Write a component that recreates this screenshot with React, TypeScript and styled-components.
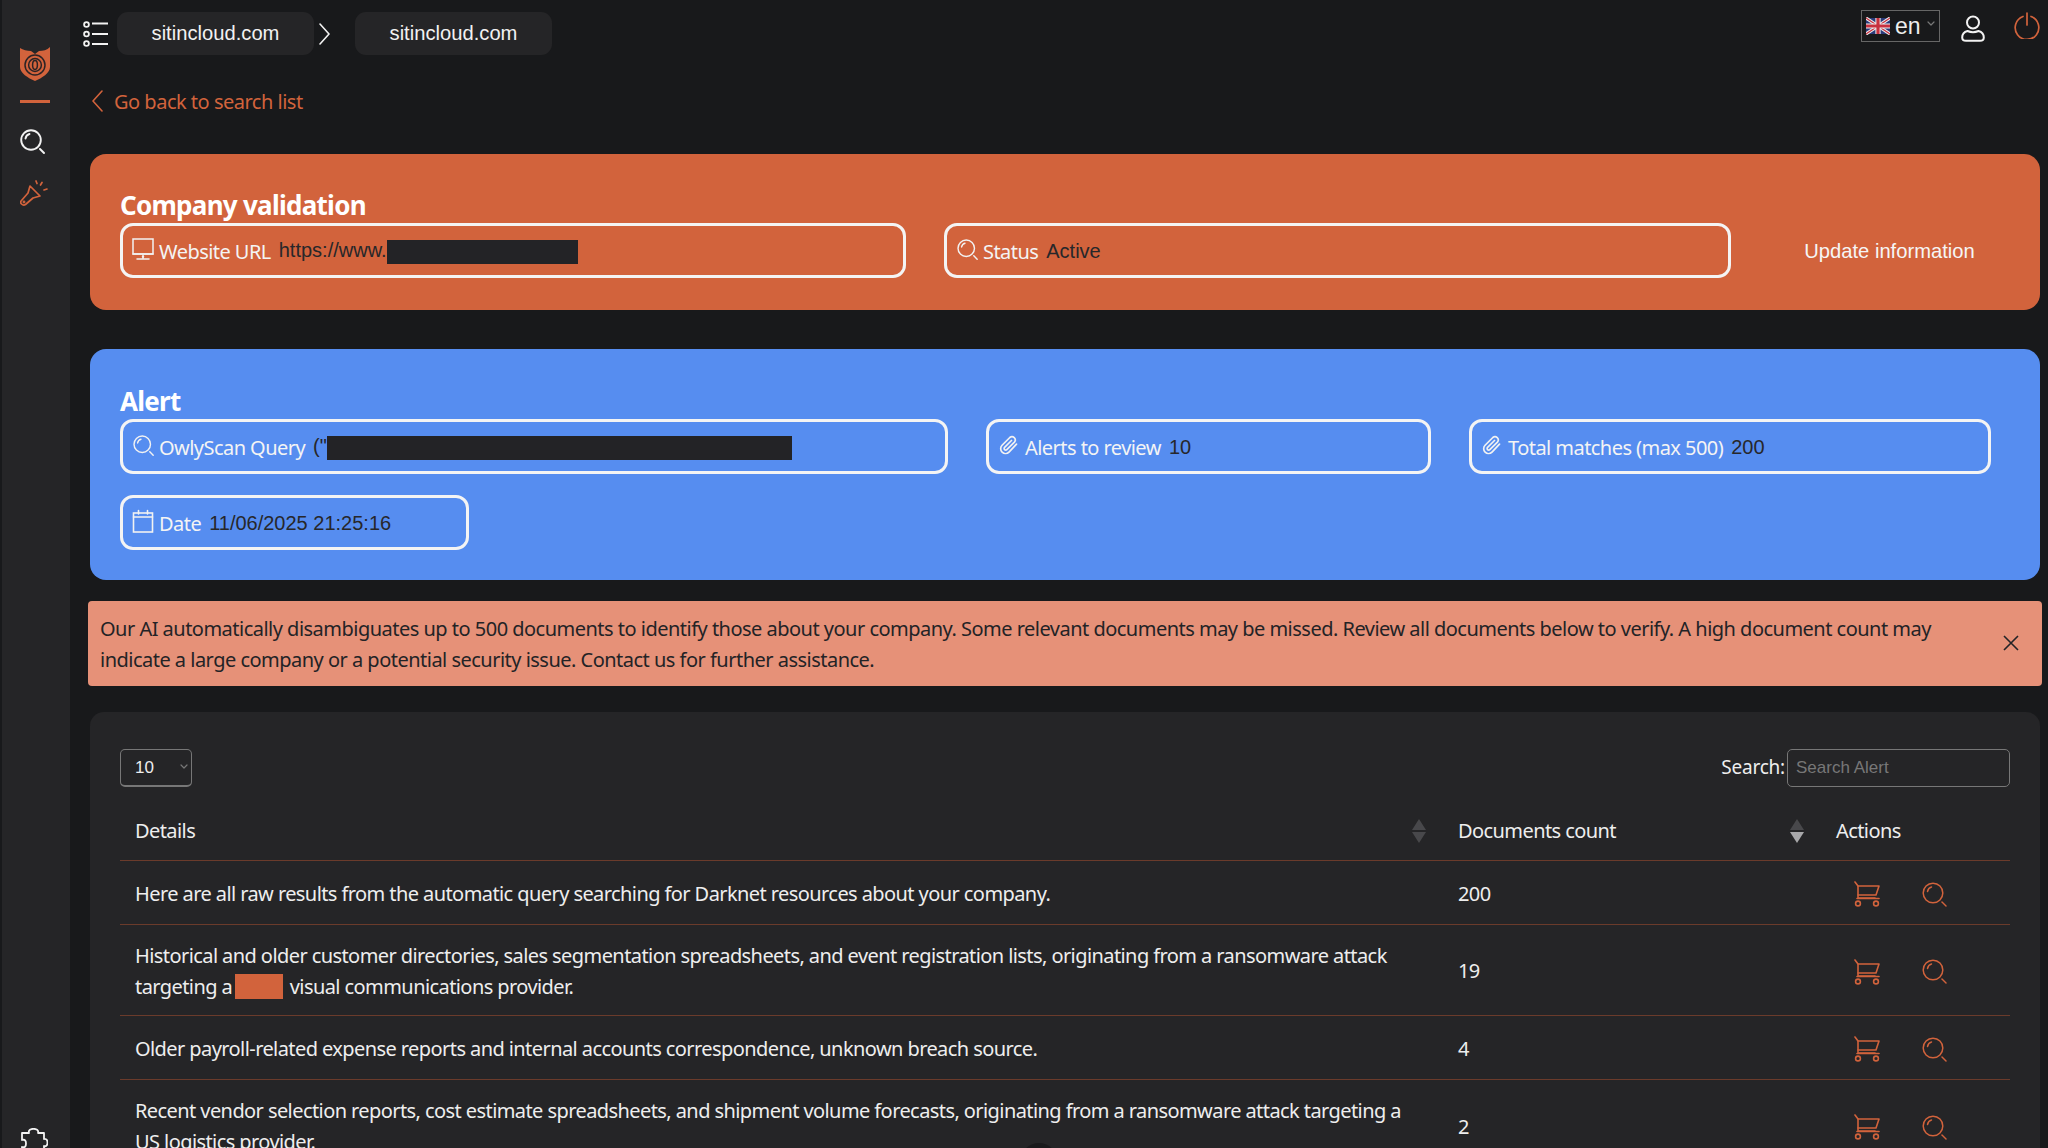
import React from 'react';
import styled, { createGlobalStyle } from 'styled-components';

const ORANGE = '#d2633c';
const UI = `"Noto Sans", "Open Sans", sans-serif`;
const ARIAL = `"Liberation Sans", Arial, sans-serif`;

const Global = createGlobalStyle`
  html, body { margin: 0; padding: 0; background: #18191b; }
  body { width: 2048px; height: 1148px; overflow: hidden; font-family: ${UI}; }
  * { box-sizing: border-box; }
`;

const Shell = styled.div`
  display: flex;
  width: 2048px;
  height: 1148px;
  overflow: hidden;
  position: relative;
  background: #18191b;
`;

const Sidebar = styled.aside`
  width: 70px;
  flex: none;
  background: #252527;
  border-left: 2px solid #18191b;
  display: flex;
  flex-direction: column;
  align-items: flex-start;
  padding: 47px 0 0 18px;
`;
const Divider = styled.div`
  width: 30px;
  height: 3px;
  background: ${ORANGE};
  margin: 19px 0 26px 0;
`;
const SideIcon = styled.div`
  height: 25px;
  margin-bottom: 26px;
  display: flex;
`;
const SideBottom = styled.div`
  margin-top: auto;
  height: 20px;
  overflow: hidden;
`;

const Main = styled.main`
  flex: 1;
  min-width: 0;
  padding: 0 8px 0 20px;
  display: flex;
  flex-direction: column;
`;
const TopBar = styled.header`
  height: 68px;
  flex: none;
  display: flex;
  align-items: flex-start;
  padding-top: 12px;
  margin-left: -7px;
`;
const ListBtn = styled.div`
  width: 34px;
  height: 43px;
  display: flex;
  align-items: center;
`;
const Crumb = styled.div`
  width: 197px;
  height: 43px;
  background: #252527;
  border-radius: 11px;
  color: #f2f2f2;
  font: 20.2px/43px ${ARIAL};
  text-align: center;
`;
const CrumbArrow = styled.div`
  width: 41px;
  height: 43px;
  padding: 11px 0 0 5px;
`;
const TopRight = styled.div`
  margin-left: auto;
  display: flex;
  align-items: flex-start;
  margin-top: -2px;
  margin-right: -8px;
`;
const Lang = styled.div`
  width: 79px;
  height: 32px;
  border: 1px solid #666;
  display: flex;
  align-items: center;
  padding-left: 4px;
  color: #eee;
  font: 23px/30px ${ARIAL};
  position: relative;
`;
const LangText = styled.span`
  margin-left: 5px;
`;
const LangChev = styled.span`
  position: absolute;
  right: 4px;
  top: 10px;
  display: flex;
`;
const UserBtn = styled.div`
  margin: 5px 0 0 21px;
`;
const PowerBtn = styled.div`
  margin: 2px 8px 0 29px;
`;

const BackRow = styled.a`
  height: 65px;
  flex: none;
  display: flex;
  align-items: center;
  gap: 11px;
  margin-left: 2px;
  padding-top: 1px;
  color: ${ORANGE};
  font-size: 20px;
  letter-spacing: -0.5px;
`;

const Card = styled.section<{ $bg: string; $top: number; $bottom: number }>`
  flex: none;
  background: ${(p) => p.$bg};
  border-radius: 16px;
  padding: ${(p) => p.$top}px 30px ${(p) => p.$bottom}px 30px;
  margin-top: 21px;
  & + & { margin-top: 39px; }
`;
const CardTitle = styled.h2`
  margin: 0;
  height: 36px;
  color: #fff;
  font: 700 26px/37px ${UI};
  letter-spacing: -0.73px;
`;
const PillRow = styled.div`
  display: flex;
  align-items: center;
  gap: 38px;
  & + & { margin-top: 21px; }
`;
const Pill = styled.div<{ $w: number }>`
  width: ${(p) => p.$w}px;
  height: 55px;
  flex: none;
  border: 3px solid #f4f4f4;
  border-radius: 13px;
  display: flex;
  align-items: center;
  padding-left: 8px;
  position: relative;
`;
const PillIcon = styled.span`
  display: flex;
  width: 24px;
  justify-content: center;
  margin-top: -3px;
`;
const PillLabel = styled.span`
  margin-left: 4px;
  margin-top: 2px;
  color: #f4f4f4;
  font-size: 20px;
  letter-spacing: -0.55px;
  white-space: nowrap;
`;
const PillValue = styled.span`
  margin-left: 8px;
  color: #27272a;
  font: 20px/26px ${ARIAL};
  white-space: nowrap;
`;
const Redact = styled.span<{ $w: number }>`
  display: inline-block;
  width: ${(p) => p.$w}px;
  height: 24px;
  background: #232326;
  vertical-align: middle;
`;
const UpdateBtn = styled.div`
  flex: 1;
  text-align: center;
  color: #f6f6f6;
  font: 20.2px/26px ${ARIAL};
`;

const Banner = styled.div`
  flex: none;
  margin: 21px -2px 0 -2px;
  height: 85px;
  background: #e69178;
  border-radius: 4px;
  padding: 12px 70px 0 12px;
  color: #232326;
  font-size: 20px;
  line-height: 31px;
  letter-spacing: -0.515px;
  position: relative;
`;
const CloseBtn = styled.span`
  position: absolute;
  right: 23px;
  top: 34px;
  display: flex;
`;

const TableCard = styled.section`
  flex: 1;
  min-height: 0;
  margin-top: 26px;
  background: #252527;
  border-radius: 14px 14px 0 0;
  padding: 37px 30px 0 30px;
  overflow: hidden;
`;
const Controls = styled.div`
  display: flex;
  align-items: center;
  justify-content: space-between;
  height: 38px;
`;
const LengthSelect = styled.div`
  width: 72px;
  height: 38px;
  border: 1px solid #777;
  border-bottom-width: 2px;
  border-radius: 5px;
  color: #eee;
  font: 17px/36px ${ARIAL};
  padding-left: 14px;
  position: relative;
`;
const SelectChev = styled.span`
  position: absolute;
  right: 3px;
  top: 14px;
  display: flex;
`;
const SearchWrap = styled.label`
  display: flex;
  align-items: center;
  gap: 2px;
`;
const SearchLabel = styled.span`
  margin-top: -2px;
  color: #eee;
  font-size: 19px;
  letter-spacing: -0.2px;
`;
const SearchInput = styled.div`
  width: 223px;
  height: 38px;
  border: 1px solid #777;
  border-radius: 5px;
  color: #777;
  font: 17px/36px ${ARIAL};
  padding-left: 8px;
`;
const Table = styled.table`
  width: 1890px;
  margin-top: 18px;
  border-collapse: collapse;
  table-layout: fixed;
  color: #eee;
  font-size: 20px;
  letter-spacing: -0.58px;
`;
const Th = styled.th`
  position: relative;
  height: 55px;
  padding: 0 15px 3px 15px;
  font-weight: 400;
  text-align: left;
  border-bottom: 1px solid #6b3b2b;
`;
const SortIcon = styled.span`
  position: absolute;
  right: 17px;
  top: 14px;
  display: flex;
`;
const Row = styled.tr`
  border-bottom: 1px solid #6b3b2b;
`;
const Td = styled.td`
  padding: 16.5px 15px 12.5px 15px;
  line-height: 30.7px;
  vertical-align: middle;
  &:first-child { padding-right: 25px; }
`;
const Actions = styled.div`
  display: flex;
  align-items: center;
  gap: 42px;
  min-height: 34px;
  padding-left: 18px;
`;
const Mark = styled.span`
  display: inline-block;
  width: 48px;
  height: 25px;
  background: ${ORANGE};
  vertical-align: -5px;
  margin: 0 2px 0 3px;
`;
const FloatBlob = styled.div`
  position: absolute;
  left: 1020px;
  top: 1143px;
  width: 38px;
  height: 38px;
  border-radius: 50%;
  background: #1a1a1c;
`;

const Mag = ({ c = '#f2f2f2', s = 25, w = 1.6 }: { c?: string; s?: number; w?: number }) => (
  <svg width={s} height={s} viewBox="0 0 25 25" fill="none" stroke={c} strokeWidth={w} strokeLinecap="round">
    <circle cx="11" cy="11" r="9.8" />
    <path d="M5.5 9.5 C6 7 7.5 5.5 9.5 5" />
    <path d="M20 20 L24 24" />
  </svg>
);
const Cart = () => (
  <svg width="26" height="26" viewBox="0 0 26 26" fill="none" stroke={ORANGE} strokeWidth="1.6" strokeLinecap="round" strokeLinejoin="round">
    <path d="M1 1 L4 5 V17 H21" />
    <path d="M4 5 H25 L22 14 H4" />
    <path d="M3 17.5 H25" />
    <circle cx="4" cy="22.5" r="2.4" />
    <circle cx="22" cy="22.5" r="2.4" />
  </svg>
);
const Clip = () => (
  <svg width="20" height="20" viewBox="0 0 24 24" fill="none" stroke="#f2f2f2" strokeWidth="2" strokeLinecap="round" strokeLinejoin="round">
    <path d="M21 11 L12 20.5 a5.8 5.8 0 0 1 -8.3 -8.2 L13 3 a3.9 3.9 0 0 1 5.5 5.5 L9.4 17.6 a1.9 1.9 0 0 1 -2.7 -2.7 L15 6.6" />
  </svg>
);
const Monitor = () => (
  <svg width="22" height="24" viewBox="0 0 22 24" fill="none" stroke="#f2f2f2" strokeWidth="1.5" strokeLinecap="round">
    <rect x="1" y="2" width="20" height="15" />
    <path d="M1 17 H21 M11 19 V21 M5 22 H17" />
    <circle cx="11" cy="19.5" r=".5" />
  </svg>
);
const Calendar = () => (
  <svg width="22" height="25" viewBox="0 0 22 25" fill="none" stroke="#f2f2f2" strokeWidth="1.6" strokeLinecap="round">
    <rect x="1.5" y="4" width="19" height="19" />
    <path d="M1.5 8 H20.5 M6.5 1.5 V5 M15.5 1.5 V5" />
  </svg>
);
const Chev = ({ c, w, h, dir, sw = 1.6 }: { c: string; w: number; h: number; dir: 'l' | 'r' | 'd'; sw?: number }) => (
  <svg width={w} height={h} viewBox={`0 0 ${w} ${h}`} fill="none" stroke={c} strokeWidth={sw} strokeLinecap="round" strokeLinejoin="round">
    {dir === 'l' && <path d={`M${w - 1} 1 L1 ${h / 2} L${w - 1} ${h - 1}`} />}
    {dir === 'r' && <path d={`M1 1 L${w - 1} ${h / 2} L1 ${h - 1}`} />}
    {dir === 'd' && <path d={`M1 1 L${w / 2} ${h - 1} L${w - 1} 1`} />}
  </svg>
);
const Logo = () => (
  <svg width="30" height="34" viewBox="0 0 30 34">
    <path fill={ORANGE} d="M0 1 C3 3 7 4 11 4 L15 7 L19 4 C23 4 27 3 30 0 V20 C30 26 22 31 15 34 C8 31 0 26 0 20 Z" />
    <g fill="none" stroke="#2b2325" strokeWidth="1.5">
      <circle cx="15" cy="18" r="10" />
      <circle cx="15" cy="18" r="6.4" />
      <ellipse cx="15" cy="18" rx="2.4" ry="4.4" />
    </g>
  </svg>
);
const Flashlight = () => (
  <svg width="28" height="26" viewBox="0 0 28 26" fill="none" stroke={ORANGE} strokeWidth="1.7" strokeLinecap="round" strokeLinejoin="round">
    <path d="M10 6 L20 16 L13 18 L5.5 24.5 C4 25.5 2.5 25 1.5 24 C0.5 23 0.5 21.5 1.5 20.5 L8 13 Z" />
    <circle cx="4" cy="22" r=".6" />
    <path d="M16 1 L17 3.5 M22 2.5 L20.5 5 M27 9 L24 10" />
  </svg>
);
const ListIcon = () => (
  <svg width="26" height="26" viewBox="0 0 26 26" fill="none" stroke="#f2f2f2" strokeWidth="1.8">
    <circle cx="3.5" cy="3.5" r="2.4" />
    <circle cx="3.5" cy="13" r="2.4" />
    <circle cx="3.5" cy="22.5" r="2.4" />
    <path d="M9 2.5 H25 M9 13 H25 M9 23 H25" />
  </svg>
);
const Flag = () => (
  <svg width="24" height="18" viewBox="0 0 60 40">
    <rect width="60" height="40" fill="#2b3a7a" />
    <path d="M0 0 L60 40 M60 0 L0 40" stroke="#eee" strokeWidth="8" />
    <path d="M0 0 L60 40 M60 0 L0 40" stroke="#c8313f" strokeWidth="3" />
    <path d="M30 0 V40 M0 20 H60" stroke="#eee" strokeWidth="13" />
    <path d="M30 0 V40 M0 20 H60" stroke="#c8313f" strokeWidth="8" />
  </svg>
);
const User = () => (
  <svg width="24" height="27" viewBox="0 0 24 27" fill="none" stroke="#f2f2f2" strokeWidth="2">
    <circle cx="12" cy="7.5" r="6" />
    <path d="M6.5 16 C3 17 1.2 19.5 1.2 22.5 C1.2 25 3 25.8 5 25.8 H19 C21 25.8 22.8 25 22.8 22.5 C22.8 19.5 21 17 17.5 16 C14 17.5 10 17.5 6.5 16 Z" />
  </svg>
);
const Power = () => (
  <svg width="26" height="27" viewBox="0 0 26 27" fill="none" stroke={ORANGE} strokeWidth="1.7" strokeLinecap="round">
    <path d="M9 4.5 A11.8 11.8 0 1 0 17 4.5" />
    <path d="M13 1 V13" />
  </svg>
);
const Puzzle = () => (
  <svg width="28" height="28" viewBox="0 0 28 28" fill="none" stroke="#f2f2f2" strokeWidth="1.8" strokeLinejoin="round">
    <path d="M2 5 H9 C8 2 11 0.8 13.5 0.8 C16 0.8 19 2 18 5 H24 V11 C27 10.5 27.5 13 27.5 15 C27.5 17 26 19 24 18 V26 H16 C16.5 23 15 22 13 22 C11 22 9 23 10 26 H2 V19 C5 20 6 18 6 15.5 C6 13 5 11 2 12 Z" />
  </svg>
);
const Sort = ({ down }: { down?: boolean }) => (
  <svg width="14" height="24" viewBox="0 0 14 24">
    <path d="M7 0 L14 11 H0 Z" fill="#48484b" />
    <path d="M7 24 L14 13 H0 Z" fill={down ? '#a8a8aa' : '#48484b'} />
  </svg>
);

const rows: { text: React.ReactNode; count: string }[] = [
  { text: 'Here are all raw results from the automatic query searching for Darknet resources about your company.', count: '200' },
  {
    text: (
      <>
        Historical and older customer directories, sales segmentation spreadsheets, and event registration lists, originating from a ransomware attack targeting a
        <Mark /> visual communications provider.
      </>
    ),
    count: '19',
  },
  { text: 'Older payroll-related expense reports and internal accounts correspondence, unknown breach source.', count: '4' },
  { text: 'Recent vendor selection reports, cost estimate spreadsheets, and shipment volume forecasts, originating from a ransomware attack targeting a US logistics provider.', count: '2' },
];

export default function App() {
  return (
    <Shell>
      <Global />
      <Sidebar>
        <Logo />
        <Divider />
        <SideIcon><Mag s={25} w={1.9} /></SideIcon>
        <SideIcon><Flashlight /></SideIcon>
        <SideBottom><Puzzle /></SideBottom>
      </Sidebar>
      <Main>
        <TopBar>
          <ListBtn><ListIcon /></ListBtn>
          <Crumb>sitincloud.com</Crumb>
          <CrumbArrow><Chev c="#f2f2f2" w={11} h={22} dir="r" /></CrumbArrow>
          <Crumb>sitincloud.com</Crumb>
          <TopRight>
            <Lang>
              <Flag />
              <LangText>en</LangText>
              <LangChev><Chev c="#777" w={8} h={5} dir="d" sw={1.2} /></LangChev>
            </Lang>
            <UserBtn><User /></UserBtn>
            <PowerBtn><Power /></PowerBtn>
          </TopRight>
        </TopBar>
        <BackRow>
          <Chev c={ORANGE} w={11} h={22} dir="l" />
          Go back to search list
        </BackRow>

        <Card $bg="#d2633c" $top={33} $bottom={32}>
          <CardTitle>Company validation</CardTitle>
          <PillRow>
            <Pill $w={786}>
              <PillIcon><Monitor /></PillIcon>
              <PillLabel>Website URL</PillLabel>
              <PillValue>https://www.<Redact $w={191} /></PillValue>
            </Pill>
            <Pill $w={787}>
              <PillIcon><Mag s={21} w={1.7} /></PillIcon>
              <PillLabel>Status</PillLabel>
              <PillValue>Active</PillValue>
            </Pill>
            <UpdateBtn>Update information</UpdateBtn>
          </PillRow>
        </Card>

        <Card $bg="#568df0" $top={34} $bottom={30}>
          <CardTitle>Alert</CardTitle>
          <PillRow>
            <Pill $w={828}>
              <PillIcon><Mag s={21} w={1.7} /></PillIcon>
              <PillLabel>OwlyScan Query</PillLabel>
              <PillValue>("<Redact $w={465} /></PillValue>
            </Pill>
            <Pill $w={445}>
              <PillIcon><Clip /></PillIcon>
              <PillLabel>Alerts to review</PillLabel>
              <PillValue>10</PillValue>
            </Pill>
            <Pill $w={522}>
              <PillIcon><Clip /></PillIcon>
              <PillLabel>Total matches (max 500)</PillLabel>
              <PillValue>200</PillValue>
            </Pill>
          </PillRow>
          <PillRow>
            <Pill $w={349}>
              <PillIcon><Calendar /></PillIcon>
              <PillLabel>Date</PillLabel>
              <PillValue>11/06/2025 21:25:16</PillValue>
            </Pill>
          </PillRow>
        </Card>

        <Banner>
          Our AI automatically disambiguates up to 500 documents to identify those about your company. Some relevant documents may be missed. Review all documents below to verify. A high document count may indicate a large company or a potential security issue. Contact us for further assistance.
          <CloseBtn>
            <svg width="16" height="16" viewBox="0 0 16 16" stroke="#232326" strokeWidth="1.6"><path d="M1 1 L15 15 M15 1 L1 15" /></svg>
          </CloseBtn>
        </Banner>

        <TableCard>
          <Controls>
            <LengthSelect>
              10
              <SelectChev><Chev c="#777" w={8} h={5} dir="d" sw={1.2} /></SelectChev>
            </LengthSelect>
            <SearchWrap>
              <SearchLabel>Search:</SearchLabel>
              <SearchInput>Search Alert</SearchInput>
            </SearchWrap>
          </Controls>
          <Table>
            <colgroup>
              <col width="1323" />
              <col width="378" />
              <col width="189" />
            </colgroup>
            <thead>
              <tr>
                <Th>Details<SortIcon><Sort /></SortIcon></Th>
                <Th>Documents count<SortIcon><Sort down /></SortIcon></Th>
                <Th>Actions</Th>
              </tr>
            </thead>
            <tbody>
              {rows.map((r) => (
                <Row key={r.count}>
                  <Td>{r.text}</Td>
                  <Td>{r.count}</Td>
                  <Td>
                    <Actions>
                      <Cart />
                      <Mag c={ORANGE} s={25} w={1.5} />
                    </Actions>
                  </Td>
                </Row>
              ))}
            </tbody>
          </Table>
        </TableCard>
      </Main>
      <FloatBlob />
    </Shell>
  );
}
